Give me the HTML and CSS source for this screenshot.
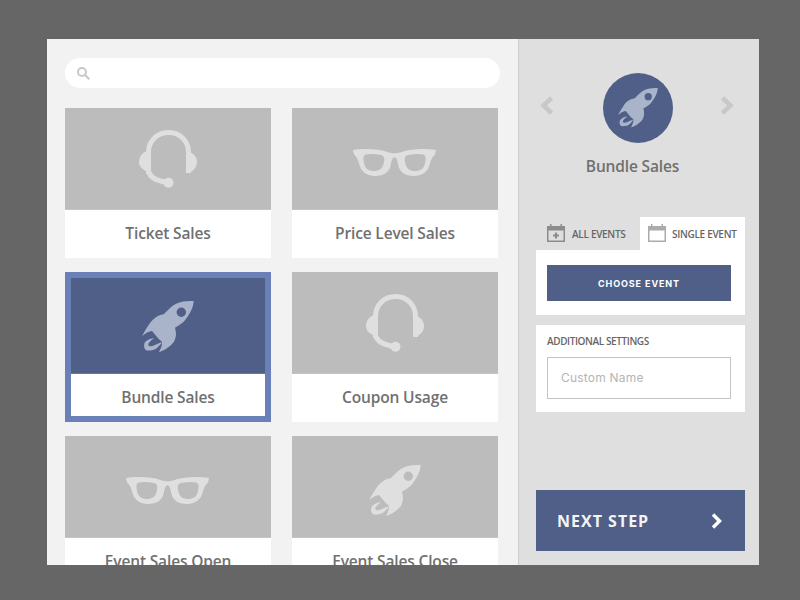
FILE: index.html
```html
<!DOCTYPE html>
<html lang="en">
<head>
  <meta charset="UTF-8" />
  <title>Report Type</title>
  <link rel="stylesheet" href="styles.css">
</head>
<body>

  <!-- shared icons -->
  <svg class="sprite">
    <symbol id="rocket" viewBox="0 0 52 52">
      <path fill-rule="evenodd" d="M51.700 0C47 0 42 0 38.300 1.300C34 2.500 31 4.500 28.300 6.700L21.700 13.300C18 14 15.500 15 13.300 16.700C10 19 8.500 21 6.700 24C4 28 2 31 .3 35C1.500 34 3 33 4.300 32C6.500 31 8 30.300 10 30L12.700 33.300L16.700 38L20 40.700C20 42.500 20 44 19.300 45.700C18.500 48 17.500 50 16.700 51.300C19.500 50.300 22.500 49 25 47.300C27.500 45.500 30 43.500 31.700 41.300C33 39 33.700 36.500 34 34C34 31.500 33.700 29 33 26.700C36 25 39 23 41.700 20.700C44 18 46 15.500 47.700 12.300C49 10 50 8 50.700 5.700C51.200 4 51.500 2 51.700 0ZM39.300 6.600A4.700 4.700 0 1 1 39.300 16A4.700 4.700 0 1 1 39.300 6.600Z"/>
      <path d="M12 37C9 37.500 6.500 38.500 5 39.500C3.500 40.500 2.500 41.500 2.300 43C2 45 2 46 2.500 47C3 48.500 4 49.500 5 49.500C7 49.800 9 49.500 11 49C13 48.500 14.500 47.500 16 46C17.500 44.500 19 43 20 41C18.500 41.500 16.500 42.500 15 43C13 44 11.500 44.800 10 45C8.500 45.300 7.500 45.300 7 45C6.300 44 6.200 43.500 6.500 42.500C7 41.500 7.800 40.800 8.500 40C9.500 39 11 38 12 37Z"/>
    </symbol>
    <symbol id="headset" viewBox="0 0 58 58">
      <path fill="none" stroke="currentColor" stroke-width="5" d="M9.500 44V22.500C9.500 11 18 2.500 29.500 2.500S49.500 11 49.500 22.500V43M9.500 40C10 47 18 51 29 52.500"/>
      <circle cx="29.500" cy="52.700" r="5"/>
      <path d="M7 21.500V41C2.500 39 0 36 0 32C0 27 3 23 7 21.500Z"/>
      <path d="M47 21.500C53 21.500 58 26 58 32C58 38 53 43 47 43Z"/>
    </symbol>
    <symbol id="glasses" viewBox="0 0 83 27">
      <path fill-rule="evenodd" d="M0 1C10 -0.500 25 -0.500 36 3.500C39 4.500 44 4.500 47 3.500C58 -0.500 73 -0.500 83 1L82 5.500C79 8 78 11 76.500 16C74.500 23 69 27 61 27C52 27 47 23 45.500 17C44.500 12 43.500 8.300 41.500 8.300C39.500 8.300 38.500 12 37.500 17C36 23 31 27 22 27C14 27 8.500 23 6.500 16C5 11 4 8 1 5.500ZM13 5.500C10 6.500 10 9 11 14C12 20 16 22 21 22C26 22 29 20 30.500 15C32 9.500 31.500 7 28 6C23 5 17 4.500 13 5.500ZM70 5.500C66 4.500 60 5 55 6C51.500 7 51 9.500 52.500 15C54 20 57 22 62 22C67 22 71 20 72 14C73 9 73 6.500 70 5.500Z"/>
    </symbol>
    <symbol id="cal" viewBox="0 0 18 18">
      <path fill-rule="evenodd" d="M0 2H3V0H4.500V2H13.500V0H15V2H18V18H0ZM1.500 6.500V16.500H16.500V6.500Z"/>
    </symbol>
  </svg>

  <div class="app">
    <!-- Report type list -->
    <div class="list">
      <div class="search">
        <svg class="search-icon" viewBox="0 0 13 13"><circle cx="5" cy="5" r="4"/><path d="M8 8L12.300 12.300"/></svg>
      </div>

      <div class="cards">
        <div class="card">
          <div class="card-img"><svg class="ic-headset"><use href="#headset"/></svg></div>
          <div class="card-label">Ticket Sales</div>
        </div>
        <div class="card">
          <div class="card-img"><svg class="ic-glasses"><use href="#glasses"/></svg></div>
          <div class="card-label">Price Level Sales</div>
        </div>
        <div class="card selected">
          <div class="card-img"><svg class="ic-rocket"><use href="#rocket"/></svg></div>
          <div class="card-label">Bundle Sales</div>
        </div>
        <div class="card">
          <div class="card-img"><svg class="ic-headset"><use href="#headset"/></svg></div>
          <div class="card-label">Coupon Usage</div>
        </div>
        <div class="card">
          <div class="card-img"><svg class="ic-glasses"><use href="#glasses"/></svg></div>
          <div class="card-label">Event Sales Open</div>
        </div>
        <div class="card">
          <div class="card-img"><svg class="ic-rocket"><use href="#rocket"/></svg></div>
          <div class="card-label">Event Sales Close</div>
        </div>
      </div>
    </div>

    <!-- Settings -->
    <div class="side">
      <div class="picker">
        <svg class="arrow" viewBox="0 0 13 19"><path d="M11.500 2L3.500 9.500L11.500 17"/></svg>
        <div class="picker-circle"><svg class="ic-rocket-small"><use href="#rocket"/></svg></div>
        <svg class="arrow" viewBox="0 0 13 19"><path d="M1.500 2L9.500 9.500L1.500 17"/></svg>
      </div>
      <div class="picker-name">Bundle Sales</div>

      <div class="tabs">
        <div class="tab">
          <svg class="tab-icon all" viewBox="0 0 18 18">
            <use href="#cal"/>
            <path class="plus" d="M9 8.500V14.500M6 11.500H12"/>
          </svg>
          <span class="tab-text">ALL EVENTS</span>
        </div>
        <div class="tab active">
          <svg class="tab-icon"><use href="#cal"/></svg>
          <span class="tab-text">SINGLE EVENT</span>
        </div>
      </div>
      <div class="box event-box">
        <button class="choose">CHOOSE EVENT</button>
      </div>

      <div class="box settings-box">
        <div class="settings-title">ADDITIONAL SETTINGS</div>
        <input class="name-input" type="text" placeholder="Custom Name" />
      </div>

      <button class="next">
        NEXT STEP
        <svg class="next-arrow" viewBox="0 0 11 16"><path d="M2 1.500L8.500 8L2 14.500"/></svg>
      </button>
    </div>
  </div>

</body>
</html>
```

FILE: styles.css
```css
* {
  box-sizing: border-box;
  padding: 0;
  margin: 0;
  font-family: 'Open Sans', sans-serif;
}

body {
  background: #666;
  height: 600px;
  overflow: hidden;
  padding: 39px 41px 35px 47px;
}

.sprite {
  display: none;
}

.app {
  display: flex;
  height: 526px;
  overflow: hidden;
}

/* left column */
.list {
  width: 471px;
  background: #f2f2f2;
  padding: 19px 18px 0;
}

.search {
  display: flex;
  align-items: center;
  width: 435px;
  height: 30px;
  padding-left: 12px;
  border-radius: 15px;
  background: #fff;
}

.search-icon {
  width: 13px;
  height: 13px;
  fill: none;
  stroke: #c8c8c8;
  stroke-width: 2;
}

.cards {
  display: grid;
  grid-template-columns: 206px 206px;
  grid-auto-rows: 150px;
  column-gap: 21px;
  row-gap: 14px;
  margin-top: 20px;
}

.card {
  display: flex;
  flex-direction: column;
  background: #fff;
}

.card-img {
  display: flex;
  flex: none;
  align-items: center;
  justify-content: center;
  height: 102px;
  background: #bcbcbc;
  border-bottom: 1px solid #c4c4c4;
  color: #dfdfdf;
  fill: #dfdfdf;
}

.card-label {
  height: 42px;
  text-align: center;
  line-height: 47px;
  font-size: 15.5px;
  font-weight: 600;
  letter-spacing: -0.15px;
  color: #707070;
}

.card.selected {
  border: 6px solid #6b80b8;
}

.card.selected .card-img {
  height: 96px;
  background: #4f5f88;
  border-bottom-color: #6a7694;
  fill: #a9b3c9;
}

.ic-headset {
  width: 58px;
  height: 58px;
}

.ic-glasses {
  width: 83px;
  height: 27px;
  margin: 8px 2px 0 0;
}

.ic-rocket {
  width: 52px;
  height: 52px;
  margin-top: 8px;
}

.card.selected .ic-rocket {
  margin-top: 2px;
}

/* right column */
.side {
  display: flex;
  flex-direction: column;
  width: 241px;
  background: #dfdfdf;
  border-left: 1px solid #cfcfcf;
  padding: 34px 14px 14px 17px;
}

.picker {
  display: flex;
  justify-content: space-between;
  padding: 0 11px 0 4px;
}

.arrow {
  width: 13px;
  height: 19px;
  margin-top: 23px;
  fill: none;
  stroke: #c8c8c8;
  stroke-width: 4.5;
}

.picker-circle {
  display: flex;
  align-items: center;
  justify-content: center;
  width: 70px;
  height: 70px;
  margin-left: 2px;
  border-radius: 50%;
  background: #4f5f88;
  fill: #a9b3c9;
}

.ic-rocket-small {
  width: 40px;
  height: 40px;
}

.picker-name {
  margin: 12px 16px 0 0;
  text-align: center;
  line-height: 22px;
  font-size: 15.5px;
  font-weight: 600;
  letter-spacing: -0.15px;
  color: #707070;
}

.tabs {
  display: flex;
  margin-top: 40px;
}

.tab {
  display: flex;
  align-items: center;
  gap: 7px;
  width: 104px;
  height: 33px;
  padding: 0 0 1px 11px;
  font-size: 10px;
  font-weight: 600;
  letter-spacing: -0.3px;
  color: #666;
}

.tab.active {
  width: 105px;
  padding-left: 8px;
  gap: 6px;
  background: #fff;
}

.tab-text {
  margin-top: 2px;
}

.tab-icon {
  width: 18px;
  height: 18px;
  fill: #ababab;
}

.tab-icon.all {
  fill: #8c8c8c;
}

.plus {
  fill: none;
  stroke: #8c8c8c;
  stroke-width: 2;
}

.box {
  background: #fff;
  padding: 0 14px 0 11px;
}

.event-box {
  height: 65px;
  padding-top: 15px;
}

.choose {
  display: block;
  width: 100%;
  height: 36px;
  border: none;
  background: #4f5f88;
  color: #fff;
  font-family: 'Inter', sans-serif;
  font-size: 9px;
  font-weight: 700;
  letter-spacing: 0.9px;
}

.settings-box {
  height: 87px;
  margin-top: 10px;
  padding-top: 9px;
}

.settings-title {
  line-height: 14px;
  font-size: 10px;
  font-weight: 600;
  letter-spacing: -0.4px;
  color: #666;
}

.name-input {
  display: block;
  width: 100%;
  height: 42px;
  margin-top: 9px;
  padding: 0 0 2px 13px;
  border: 1px solid #c4c4c4;
  background: #fff;
  font-family: 'Inter', sans-serif;
  font-size: 12px;
  letter-spacing: 0.2px;
}

.name-input::placeholder {
  color: #b5b5b5;
}

.next {
  display: flex;
  align-items: center;
  justify-content: space-between;
  height: 61px;
  margin-top: auto;
  padding: 0 23px 0 21px;
  border: none;
  background: #4f5f88;
  color: #f4f4f4;
  font-size: 16px;
  font-weight: 700;
  letter-spacing: 1px;
}

.next-arrow {
  width: 11px;
  height: 16px;
  fill: none;
  stroke: #fff;
  stroke-width: 3.5;
}
```
